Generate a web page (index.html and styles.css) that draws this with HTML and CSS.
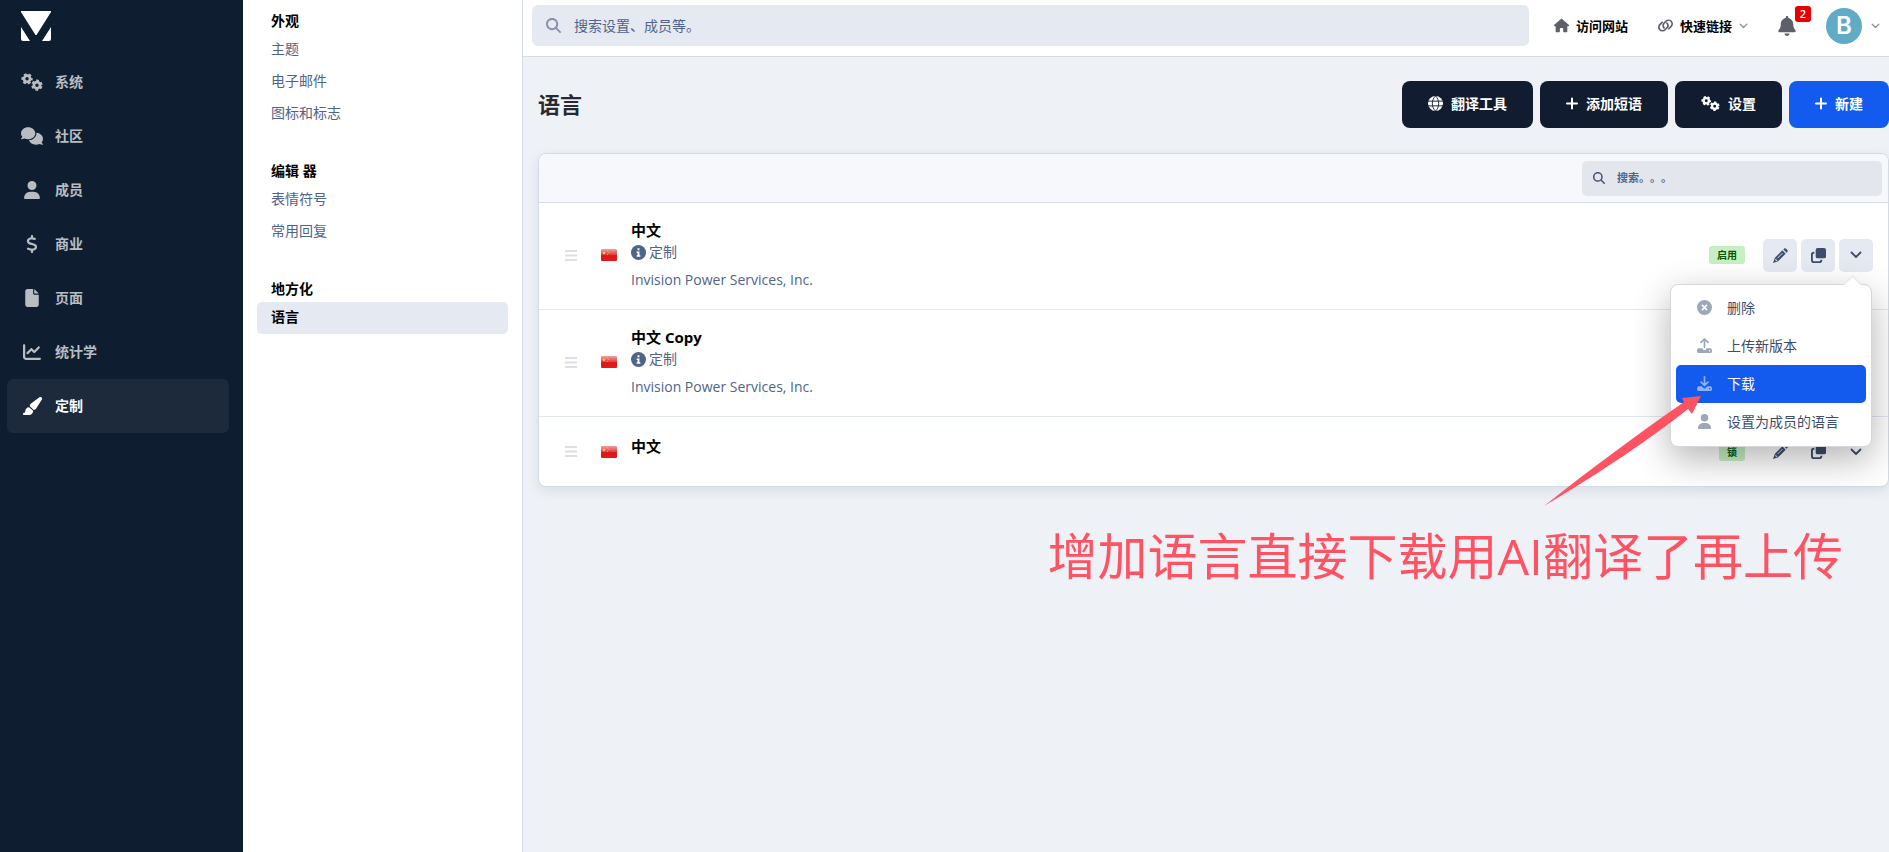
FILE: index.html
```html
<!DOCTYPE html>
<html lang="zh-CN">
<head>
    <meta charset="UTF-8">
    <meta name="viewport" content="width=device-width, initial-scale=1.0">
    <title>语言</title>
    <link rel="stylesheet" href="styles.css">
</head>
<body>
    <!-- Icon sprite -->
    <svg class="sprite" aria-hidden="true">
        <symbol id="gears" viewBox="0 0 640 512">
            <g fill="none" stroke="currentColor">
                <circle cx="176" cy="164" r="90" stroke-width="80"/>
                <circle cx="176" cy="164" r="136" stroke-width="56" stroke-dasharray="80 62.400" stroke-dashoffset="40"/>
                <circle cx="464" cy="348" r="90" stroke-width="80"/>
                <circle cx="464" cy="348" r="136" stroke-width="56" stroke-dasharray="80 62.400" stroke-dashoffset="111"/>
            </g>
        </symbol>
        <symbol id="comments" viewBox="0 0 640 512"><path d="M208 352c114.900 0 208-78.800 208-176S322.900 0 208 0S0 78.800 0 176c0 38.600 14.700 74.300 39.600 103.400c-3.500 9.400-8.700 17.700-14.200 24.700c-4.800 6.200-9.700 11-13.300 14.300c-1.800 1.600-3.300 2.900-5.700 4.700C1 327.200-1.400 334.400 .8 340.900S9.100 352 16 352c21.800 0 43.800-5.600 62.100-12.500c9.200-3.500 17.800-7.400 25.200-11.400C134.100 343.300 169.800 352 208 352zM448 176c0 112.300-99.100 196.900-216.500 207C255.800 457.400 336.400 512 432 512c38.200 0 73.900-8.700 104.700-23.900c7.500 4 16 7.900 25.200 11.400c18.300 6.900 40.300 12.500 62.100 12.500c6.900 0 13.100-4.500 15.200-11.100c2.100-6.600-.2-13.800-5.800-17.900c-1-.8-3.700-2.700-5.900-4.700c-3.600-3.300-8.500-8.100-13.300-14.300c-5.500-7-10.700-15.400-14.200-24.700c24.900-29 39.600-64.700 39.600-103.400c0-92.800-84.900-168.900-192.600-175.500c.4 5.100 .6 10.300 .6 15.500z"/></symbol>
        <symbol id="user" viewBox="0 0 448 512"><path d="M224 256A128 128 0 1 0 224 0a128 128 0 1 0 0 256zm-45.700 48C79.800 304 0 383.800 0 482.300C0 498.700 13.300 512 29.700 512H418.300c16.400 0 29.700-13.300 29.700-29.700C448 383.800 368.200 304 269.700 304H178.300z"/></symbol>
        <symbol id="dollar" viewBox="0 0 320 512"><path d="M160 0c17.700 0 32 14.300 32 32V67.700c1.600 .2 3.100 .4 4.700 .7c.4 .1 .7 .1 1.100 .2l48 8.800c17.400 3.200 28.900 19.900 25.700 37.200s-19.900 28.900-37.200 25.700l-47.500-8.700c-31.300-4.600-58.900-1.500-78.300 6.200s-27.200 18.300-29 28.100c-2 10.700-.5 16.700 1.200 20.400c1.800 3.900 5.500 8.300 12.800 13.200c16.300 10.700 41.300 17.700 73.700 26.300l2.900 .8c28.600 7.600 63.600 16.800 89.600 33.800c14.200 9.300 27.600 21.900 35.900 39.500c8.500 17.900 10.300 37.900 6.400 59.200c-6.900 38-33.100 63.400-65.600 76.700c-13.700 5.600-28.600 9.200-44.400 11V480c0 17.700-14.300 32-32 32s-32-14.300-32-32V445.100c-.4-.1-.9-.1-1.500-.2c-24.400-3.800-64.500-14.300-91.500-26.300c-16.100-7.200-23.400-26.100-16.200-42.200s26.100-23.400 42.200-16.200c20.900 9.300 55.300 18.500 75.200 21.600c31.900 4.700 58.200 2 76-5.300c16.900-6.900 24.600-16.900 26.800-28.900c1.900-10.600 .4-16.700-1.300-20.400c-1.900-4-5.600-8.400-13-13.300c-16.400-10.700-41.500-17.700-74-26.300l-2.800-.7C119.400 279.300 84.400 270 58.400 253c-14.200-9.300-27.500-22-35.800-39.600c-8.400-17.900-10.100-37.900-6.100-59.200C23.700 116 52.300 91.200 84.800 78.300c13.300-5.300 27.900-8.900 43.200-11V32c0-17.700 14.300-32 32-32z"/></symbol>
        <symbol id="file" viewBox="0 0 384 512"><path d="M0 64C0 28.700 28.700 0 64 0H224V128c0 17.700 14.300 32 32 32H384V448c0 35.300-28.700 64-64 64H64c-35.300 0-64-28.700-64-64V64zm384 64H256V0L384 128z"/></symbol>
        <symbol id="chart" viewBox="0 0 512 512"><path d="M64 64c0-17.700-14.300-32-32-32S0 46.300 0 64V400c0 44.200 35.800 80 80 80H480c17.700 0 32-14.300 32-32s-14.300-32-32-32H80c-8.800 0-16-7.200-16-16V64zm406.600 86.600c12.500-12.500 12.500-32.800 0-45.300s-32.800-12.500-45.300 0L320 210.700l-57.400-57.400c-12.500-12.500-32.800-12.500-45.300 0l-112 112c-12.500 12.500-12.500 32.800 0 45.300s32.800 12.500 45.300 0L240 221.300l57.400 57.400c12.500 12.500 32.800 12.500 45.300 0l128-128z"/></symbol>
        <symbol id="brush" viewBox="0 0 576 512"><path d="M339.300 367.100c27.300-3.900 51.900-19.400 67.200-42.900L568.200 74.100c12.600-19.500 9.400-45.300-7.600-61.200S517.700-4.400 499.100 9.600L262.400 187.200c-24 18-38.200 46.100-38.400 76.100L339.300 367.100zm-19.600 25.400l-116-104.400C143.900 290.300 96 339.600 96 400c0 3.900 .2 7.800 .6 11.600C98.400 429.100 86.400 448 68.800 448H64c-17.700 0-32 14.300-32 32s14.300 32 32 32H208c61.900 0 112-50.100 112-112c0-2.500-.1-5-.2-7.500z"/></symbol>
        <symbol id="search" viewBox="0 0 512 512"><path d="M416 208c0 45.900-14.900 88.300-40 122.700L502.600 457.400c12.500 12.500 12.500 32.800 0 45.300s-32.800 12.500-45.300 0L330.700 376c-34.400 25.200-76.800 40-122.700 40C93.100 416 0 322.900 0 208S93.100 0 208 0S416 93.100 416 208zM208 352a144 144 0 1 0 0-288 144 144 0 1 0 0 288z"/></symbol>
        <symbol id="house" viewBox="0 0 576 512"><path d="M576 255c0 18-15 32-32 32h-32v185c0 22-18 40-40 40h-80c-22 0-40-18-40-40v-88c0-18-14-32-32-32h-64c-18 0-32 14-32 32v88c0 22-18 40-40 40h-80c-22 0-40-18-40-40V287H32c-18 0-32-14-32-32 0-9 3-17 10-24L266 8c7-7 15-8 22-8s15 2 21 7l256 224c8 7 12 15 11 24z"/></symbol>
        <symbol id="link" viewBox="0 0 32 26">
            <g fill="none" stroke="currentColor" stroke-width="3.500" stroke-linecap="round">
                <path d="M13 18c-3-3-3-7 0-10l4-4c3-3 8-3 11 0s3 8 0 11l-5 5"/>
                <path d="M19 8c3 3 3 7 0 10l-4 4c-3 3-8 3-11 0s-3-8 0-11l5-5"/>
            </g>
        </symbol>
        <symbol id="bell" viewBox="0 0 448 512"><path d="M224 0c-17.700 0-32 14.300-32 32V51.200C119 66 64 130.600 64 208v18.800c0 47-17.300 92.400-48.500 127.600l-7.400 8.300c-8.400 9.400-10.400 22.900-5.300 34.400S19.400 416 32 416H416c12.600 0 24-7.400 29.200-18.900s3.100-25-5.300-34.400l-7.400-8.300C401.300 319.200 384 273.900 384 226.800V208c0-77.400-55-142-128-156.800V32c0-17.700-14.300-32-32-32zm45.300 493.300c12-12 18.700-28.300 18.700-45.300H224 160c0 17 6.700 33.300 18.700 45.300s28.300 18.700 45.300 18.700s33.300-6.700 45.300-18.700z"/></symbol>
        <symbol id="chevron" viewBox="0 0 12 8"><path d="M1.500 1.500L6 6l4.500-4.500" fill="none" stroke="currentColor" stroke-width="1.800" stroke-linecap="round" stroke-linejoin="round"/></symbol>
        <symbol id="globe" viewBox="0 0 16 16">
            <circle cx="8" cy="8" r="8"/>
            <path d="M0 5.500h16M0 10.500h16M8 0C3.500 4 3.500 12 8 16M8 0c4.500 4 4.500 12 0 16" fill="none" stroke="#111c30" stroke-width="1"/>
        </symbol>
        <symbol id="plus" viewBox="0 0 12 12"><path d="M6 1v10M1 6h10" fill="none" stroke="currentColor" stroke-width="2" stroke-linecap="round"/></symbol>
        <symbol id="bars" viewBox="0 0 12 11"><path d="M0 1h12M0 5.500h12M0 10h12" fill="none" stroke="currentColor" stroke-width="1.800"/></symbol>
        <symbol id="info" viewBox="0 0 16 16">
            <circle cx="8" cy="8" r="8"/>
            <path d="M7 3.500h2v2H7zM6 7h3v4h1v1.500H6V11h1V8.500H6z" fill="#fff"/>
        </symbol>
        <symbol id="pencil" viewBox="0 0 16 16">
            <path d="M11 1.500l.8-.8c1.400-1.400 4.900 2.100 3.500 3.500l-.8.8zM10 2.500L13.500 6 5.500 14 0 16l2-5.500z"/>
            <path d="M4.800 10.800l5.400-5.400M3 11.500v1.700h1.600" fill="none" stroke="#e4e9f2" stroke-width="1"/>
        </symbol>
        <symbol id="copy" viewBox="0 0 16 16">
            <rect x="5" y="0" width="11" height="11" rx="2"/>
            <path d="M3.500 5H3a2 2 0 0 0-2 2v6a2 2 0 0 0 2 2h6a2 2 0 0 0 2-2v-.5" fill="none" stroke="currentColor" stroke-width="2"/>
        </symbol>
        <symbol id="cross" viewBox="0 0 16 16">
            <circle cx="8" cy="8" r="8"/>
            <path d="M5.800 5.800l4.400 4.400M10.200 5.800l-4.400 4.400" stroke="#fff" stroke-width="1.700" stroke-linecap="round"/>
        </symbol>
        <symbol id="upload" viewBox="0 0 16 16">
            <path d="M8 10V1.500M4.300 4.700L8 1l3.700 3.700" fill="none" stroke="currentColor" stroke-width="1.800" stroke-linecap="round"/>
            <path d="M2 11h4a2 2 0 0 0 4 0h4a2 2 0 0 1 2 2v1a2 2 0 0 1-2 2H2a2 2 0 0 1-2-2v-1a2 2 0 0 1 2-2zm11.500 1.700a.8.8 0 1 0 0 1.600.8.8 0 0 0 0-1.600z"/>
        </symbol>
        <symbol id="download" viewBox="0 0 16 16">
            <path d="M8 1v8.500M4.300 6.500L8 10l3.700-3.500" fill="none" stroke="currentColor" stroke-width="1.800" stroke-linecap="round"/>
            <path d="M2 11h3l3 2.500 3-2.500h3a2 2 0 0 1 2 2v1a2 2 0 0 1-2 2H2a2 2 0 0 1-2-2v-1a2 2 0 0 1 2-2zm11.500 1.700a.8.8 0 1 0 0 1.600.8.8 0 0 0 0-1.600z"/>
        </symbol>
        <linearGradient id="flag-shine" x1="0" y1="0" x2="0" y2="1">
            <stop offset="0" stop-color="#f2a0a0"/>
            <stop offset="0.500" stop-color="#e03a3c"/>
            <stop offset="0.550" stop-color="#de1418"/>
            <stop offset="1" stop-color="#e41a1c"/>
        </linearGradient>
        <symbol id="flag" viewBox="0 0 16 12">
            <rect width="16" height="12" rx="1" fill="url(#flag-shine)"/>
            <path d="M3 2l.5 1.300h1.300l-1 .9.400 1.300L3 4.700l-1.200.8.400-1.300-1-.9h1.300z" fill="#ffd23c"/>
            <path d="M6 1.500h.8v.8H6zM7 3h.8v.8H7zM6 5h.8v.8H6z" fill="#ffd23c"/>
        </symbol>
    </svg>

    <div class="app">
        <nav class="sidebar">
            <a class="logo" href="#" aria-label="Invision">
                <svg viewBox="0 0 30 30"><path d="M0 1V0h30v1L15.500 24h-1zM0 16l9 14H2a2 2 0 0 1-2-2zM30 16l-9 14h7a2 2 0 0 0 2-2z" fill="#fff"/></svg>
            </a>
            <ul class="main-nav">
                <li><a href="#"><span class="nav-icon"><svg class="i-wide"><use href="#gears"/></svg></span>系统</a></li>
                <li><a href="#"><span class="nav-icon"><svg class="i-wide"><use href="#comments"/></svg></span>社区</a></li>
                <li><a href="#"><span class="nav-icon"><svg><use href="#user"/></svg></span>成员</a></li>
                <li><a href="#"><span class="nav-icon"><svg><use href="#dollar"/></svg></span>商业</a></li>
                <li><a href="#"><span class="nav-icon"><svg><use href="#file"/></svg></span>页面</a></li>
                <li><a href="#"><span class="nav-icon"><svg><use href="#chart"/></svg></span>统计学</a></li>
                <li><a class="active" href="#"><span class="nav-icon"><svg class="i-brush"><use href="#brush"/></svg></span>定制</a></li>
            </ul>
        </nav>

        <nav class="subnav">
            <h3>外观</h3>
            <ul>
                <li><a href="#">主题</a></li>
                <li><a href="#">电子邮件</a></li>
                <li><a href="#">图标和标志</a></li>
            </ul>
            <h3>编辑 器</h3>
            <ul>
                <li><a href="#">表情符号</a></li>
                <li><a href="#">常用回复</a></li>
            </ul>
            <h3>地方化</h3>
            <ul>
                <li><a class="active" href="#">语言</a></li>
            </ul>
        </nav>

        <div class="content">
            <header class="topbar">
                <label class="search">
                    <svg><use href="#search"/></svg>
                    <input type="text" placeholder="搜索设置、成员等。" aria-label="搜索设置、成员等。">
                </label>
                <div class="tools">
                    <a class="tool-link" href="#"><svg><use href="#house"/></svg>访问网站</a>
                    <a class="tool-link" href="#"><svg><use href="#link"/></svg>快速链接<svg class="chev"><use href="#chevron"/></svg></a>
                    <button class="bell" type="button" aria-label="通知"><svg><use href="#bell"/></svg><span class="count">2</span></button>
                    <button class="account" type="button"><span class="avatar">B</span><svg class="chev"><use href="#chevron"/></svg></button>
                </div>
            </header>

            <main>
                <div class="page-head">
                    <h1>语言</h1>
                    <div class="actions">
                        <button class="btn" type="button"><svg><use href="#globe"/></svg>翻译工具</button>
                        <button class="btn" type="button"><svg class="i-plus"><use href="#plus"/></svg>添加短语</button>
                        <button class="btn" type="button"><svg class="i-gears"><use href="#gears"/></svg>设置</button>
                        <button class="btn btn-primary" type="button"><svg class="i-plus"><use href="#plus"/></svg>新建</button>
                    </div>
                </div>

                <section class="panel">
                    <div class="panel-head">
                        <label class="filter">
                            <svg><use href="#search"/></svg>
                            <input type="text" placeholder="搜索。。。" aria-label="搜索">
                        </label>
                    </div>
                    <ul class="rows">
                        <li class="row">
                            <svg class="handle"><use href="#bars"/></svg>
                            <svg class="flag"><use href="#flag"/></svg>
                            <div class="info">
                                <h4>中文</h4>
                                <p class="custom"><svg><use href="#info"/></svg>定制</p>
                                <p class="author">Invision Power Services, Inc.</p>
                            </div>
                            <span class="badge">启用</span>
                            <div class="controls">
                                <button type="button" aria-label="编辑"><svg><use href="#pencil"/></svg></button>
                                <button type="button" aria-label="复制"><svg><use href="#copy"/></svg></button>
                                <button type="button" aria-label="更多"><svg class="i-more"><use href="#chevron"/></svg></button>
                                <ul class="menu">
                                    <li><a href="#"><svg><use href="#cross"/></svg>删除</a></li>
                                    <li><a href="#"><svg><use href="#upload"/></svg>上传新版本</a></li>
                                    <li><a class="selected" href="#"><svg><use href="#download"/></svg>下载</a></li>
                                    <li><a href="#"><svg><use href="#user"/></svg>设置为成员的语言</a></li>
                                </ul>
                            </div>
                        </li>
                        <li class="row">
                            <svg class="handle"><use href="#bars"/></svg>
                            <svg class="flag"><use href="#flag"/></svg>
                            <div class="info">
                                <h4>中文 Copy</h4>
                                <p class="custom"><svg><use href="#info"/></svg>定制</p>
                                <p class="author">Invision Power Services, Inc.</p>
                            </div>
                        </li>
                        <li class="row">
                            <svg class="handle"><use href="#bars"/></svg>
                            <svg class="flag"><use href="#flag"/></svg>
                            <div class="info">
                                <h4>中文</h4>
                            </div>
                            <span class="badge">锁</span>
                            <div class="controls plain">
                                <button type="button" aria-label="编辑"><svg><use href="#pencil"/></svg></button>
                                <button type="button" aria-label="复制"><svg><use href="#copy"/></svg></button>
                                <button type="button" aria-label="更多"><svg class="i-more"><use href="#chevron"/></svg></button>
                            </div>
                        </li>
                    </ul>
                </section>
            </main>

            <!-- Note with arrow over the page -->
            <div class="note">
                <svg viewBox="0 0 160 112"><path d="M158 1L149 19 145 14C110 42 60 76 1 111 50 72 95 39 141 7L139 3z"/></svg>
                <p>增加语言直接下载用AI翻译了再上传</p>
            </div>
        </div>
    </div>
</body>
</html>
```
FILE: styles.css
```css
* {
    box-sizing: border-box;
}

body {
    font-family: "Open Sans", "Noto Sans CJK SC", sans-serif;
    font-size: 14px;
    line-height: 22px;
    color: #000;
    background-color: #eef1f6;
    margin: 0;
}

h1, h3, h4, p, ul {
    margin: 0;
    padding: 0;
}

ul {
    list-style: none;
}

a {
    color: inherit;
    text-decoration: none;
}

button, input {
    font: inherit;
    color: inherit;
    background: none;
    border: 0;
    padding: 0;
}

button {
    cursor: pointer;
}

svg {
    width: 15px;
    height: 15px;
    fill: currentColor;
    flex: none;
}

.sprite {
    position: absolute;
    width: 0;
    height: 0;
}

.app {
    display: flex;
    min-height: 100vh;
}

/* Left navigation */
.sidebar {
    flex: 0 0 243px;
    background-color: #0e1e30;
    padding: 11px 14px 0 7px;
}

.logo {
    display: block;
    height: 44px;
    padding-left: 14px;
}

.logo svg {
    width: 30px;
    height: 30px;
}

.main-nav a {
    display: flex;
    align-items: center;
    gap: 10px;
    height: 54px;
    padding-left: 12px;
    border-radius: 6px;
    color: #b9bdc1;
    font-weight: 600;
}

.nav-icon {
    display: flex;
    justify-content: center;
    width: 26px;
}

.nav-icon svg {
    width: 18px;
    height: 18px;
}

.nav-icon .i-wide,
.nav-icon .i-brush {
    width: 22px;
}

.main-nav .active {
    background-color: #1c2a3b;
    color: #fff;
}

/* Section navigation */
.subnav {
    flex: 0 0 280px;
    background-color: #fff;
    border-right: 1px solid #d5dce8;
    padding: 8px 14px;
}

.subnav h3 {
    padding-left: 14px;
    font-size: 14px;
    line-height: 26px;
}

.subnav ul {
    margin-bottom: 28px;
}

.subnav a {
    display: block;
    height: 32px;
    padding-left: 14px;
    line-height: 30px;
    border-radius: 5px;
    color: #506488;
}

.subnav .active {
    background-color: #e4e9f2;
    color: #000;
    font-weight: 600;
}

.content {
    position: relative;
    flex: 1;
    min-width: 0;
}

/* Top bar */
.topbar {
    display: flex;
    align-items: center;
    gap: 25px;
    height: 57px;
    padding: 0 9px 5px;
    background-color: #fff;
    border-bottom: 1px solid #d5d9e0;
}

.search {
    flex: 1;
    display: flex;
    align-items: center;
    gap: 13px;
    height: 41px;
    padding: 0 14px;
    border-radius: 6px;
    background-color: #e4e9f2;
    color: #8490a8;
}

.search input,
.filter input {
    flex: 1;
    min-width: 0;
    outline: 0;
    text-spacing-trim: space-all;
}

input::placeholder {
    color: #506488;
    opacity: 1;
}

.tools {
    display: flex;
    align-items: center;
    gap: 30px;
}

.tool-link {
    display: flex;
    align-items: center;
    gap: 7px;
    font-size: 13px;
    font-weight: 600;
}

.tool-link svg {
    color: #5d6068;
}

.tools .chev {
    width: 9px;
    height: 6px;
    color: #8a8d94;
}

.bell {
    position: relative;
    display: flex;
    color: #5d6068;
}

.bell svg {
    width: 18px;
    height: 20px;
}

.count {
    position: absolute;
    left: 17px;
    top: -10px;
    width: 16px;
    border-radius: 3px;
    background-color: #e80000;
    color: #fff;
    font-size: 11px;
    font-weight: 600;
    line-height: 16px;
}

.account {
    display: flex;
    align-items: center;
    gap: 9px;
}

.avatar {
    width: 36px;
    border-radius: 50%;
    background-color: #62abc6;
    color: #fff;
    font-family: Inter, sans-serif;
    font-size: 24px;
    font-weight: 600;
    line-height: 36px;
}

/* Page */
main {
    padding: 24px 0 24px 15px;
}

.page-head {
    display: flex;
    align-items: center;
    justify-content: space-between;
    margin-bottom: 25px;
}

h1 {
    padding-bottom: 2px;
    font-size: 22px;
    color: #272a30;
}

.actions {
    display: flex;
    gap: 7px;
}

.btn {
    display: flex;
    align-items: center;
    gap: 8px;
    height: 47px;
    padding: 0 26px 2px;
    border-radius: 8px;
    background-color: #111c30;
    color: #fff;
    font-weight: 600;
}

.btn .i-plus {
    width: 12px;
}

.btn .i-gears {
    width: 19px;
}

.btn-primary {
    background-color: #125bee;
}

.panel {
    border: 1px solid #d3dbe7;
    border-radius: 8px;
    background-color: #fff;
    box-shadow: 0 4px 12px rgba(40, 60, 110, 0.1);
}

.panel-head {
    display: flex;
    justify-content: flex-end;
    padding: 7px 6px 6px;
    border-bottom: 1px solid #d3dbe7;
    border-radius: 8px 8px 0 0;
    background-color: #f7f8fc;
}

.filter {
    display: flex;
    align-items: center;
    gap: 12px;
    width: 300px;
    height: 35px;
    padding: 0 11px 2px;
    border-radius: 5px;
    background-color: #e3e6ed;
    color: #44546f;
    font-size: 11px;
    font-weight: 600;
}

.filter svg {
    width: 12px;
    height: 12px;
}

.row {
    display: flex;
    align-items: center;
    min-height: 68px;
    padding: 16px 15px 18px 26px;
    border-bottom: 1px solid #e3e7f0;
}

.row:last-child {
    border-bottom: 0;
    padding-top: 18px;
}

.handle {
    width: 12px;
    height: 11px;
    margin-right: 24px;
    color: #dcdfe5;
}

.flag {
    width: 16px;
    height: 12px;
    margin-right: 14px;
}

.info {
    flex: 1;
    align-self: flex-start;
    color: #506488;
}

.info h4 {
    font-size: 15px;
    color: #000;
}

.custom {
    display: flex;
    align-items: center;
    gap: 3px;
}

.author {
    margin-top: 6px;
}

.badge {
    margin-right: 18px;
    padding: 0 8px;
    border-radius: 3px;
    background-color: #c6f0c2;
    color: #0a560a;
    font-size: 10px;
    font-weight: 600;
    line-height: 18px;
}

.controls {
    position: relative;
    display: flex;
    gap: 4px;
}

.controls button {
    display: flex;
    align-items: center;
    justify-content: center;
    width: 34px;
    height: 33px;
    border-radius: 5px;
    background-color: #e4e9f2;
    color: #3d4d6b;
}

.controls.plain button {
    background: none;
}

.controls .i-more {
    width: 12px;
    height: 8px;
}

/* Drop-down */
.menu {
    position: absolute;
    z-index: 1;
    top: 45px;
    right: 1px;
    width: 202px;
    padding: 4px 5px 5px;
    border: 1px solid #d5d7dc;
    border-radius: 8px;
    background-color: #fff;
    box-shadow: 0 12px 36px rgba(0, 0, 0, 0.3);
}

.menu::before {
    content: "";
    position: absolute;
    top: -7px;
    right: 12px;
    width: 12px;
    height: 12px;
    border: 1px solid #e0e2e6;
    border-width: 1px 0 0 1px;
    background-color: #fff;
    transform: rotate(45deg);
}

.menu a {
    position: relative;
    display: flex;
    align-items: center;
    gap: 15px;
    height: 38px;
    padding-left: 21px;
    border-radius: 5px;
    color: #3d4d6b;
}

.menu svg {
    color: #9ea7b8;
}

.menu .selected {
    background-color: #125bee;
    color: #fff;
}

.menu .selected svg {
    color: #8fb2f8;
}

/* Note */
.note {
    position: absolute;
    z-index: 2;
    top: 395px;
    right: 46px;
    color: #ff5364;
    font-size: 50px;
    line-height: 70px;
    white-space: nowrap;
    pointer-events: none;
}

.note svg {
    display: block;
    width: 160px;
    height: 112px;
    margin: 0 140px 14px auto;
}
```
